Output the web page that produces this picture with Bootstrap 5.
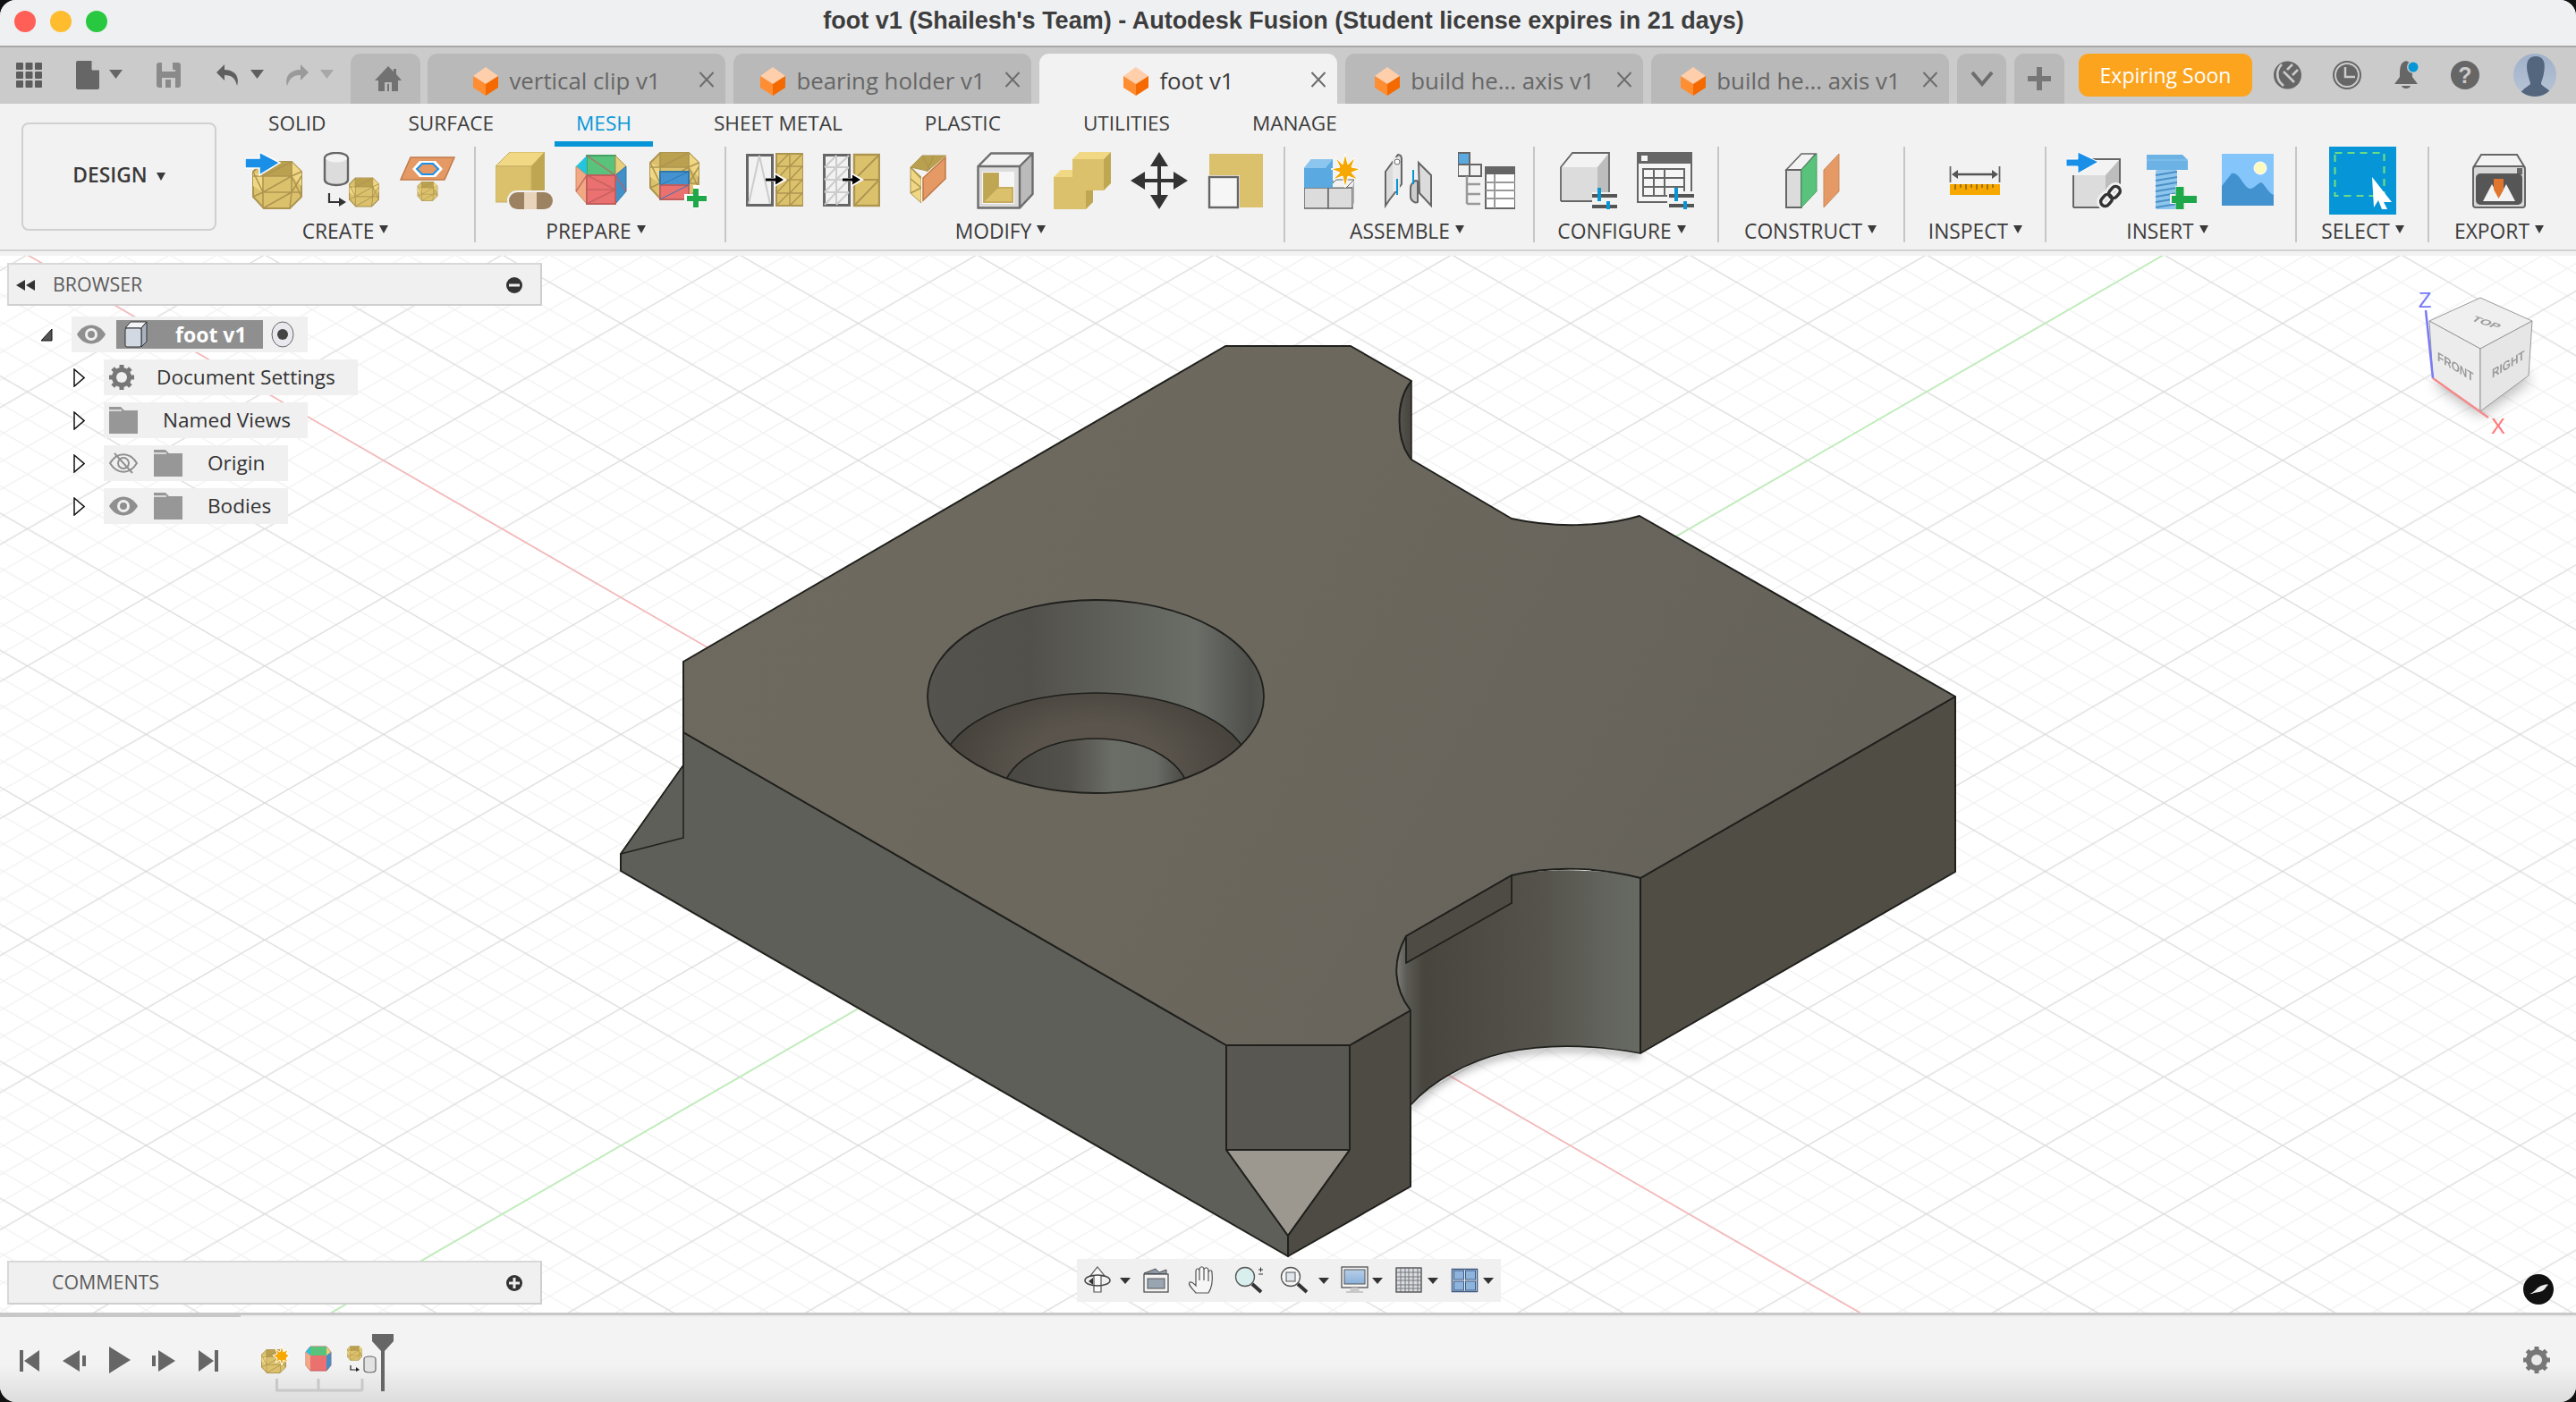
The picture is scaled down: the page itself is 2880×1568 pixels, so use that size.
<!DOCTYPE html>
<html lang="en">
<head>
<meta charset="utf-8">
<title>foot v1 - Autodesk Fusion</title>
<link href="https://cdn.jsdelivr.net/npm/bootstrap@5.3.0/dist/css/bootstrap.min.css" rel="stylesheet">
<style>
html,body{margin:0;width:2880px;height:1568px;overflow:hidden;background:#111}
body{font-family:"Open Sans","Noto Sans",sans-serif;color:#3a3a3a}
.fx-win{width:2880px;height:1568px;border-radius:18px;overflow:hidden;background:#f2f2f2}
.fx-title{height:53px;background:#eff0f2;border-bottom:2px solid #a8a8a8;font-family:"Liberation Sans",sans-serif;font-weight:700;font-size:27px;color:#3d3d3d;flex:none;padding:0 10px 4px 0}
.fx-lights{left:16px;top:12px;gap:16px}
.fx-light{width:24px;height:24px;border-radius:50%}
.fx-tabbar{height:63px;background:#cbcbcb;flex:none;padding-top:7px}
.fx-tool{width:392px;height:56px;flex:none}
.fx-tab{height:56px;width:333px;margin-right:9px;background:#b9b9b9;border-radius:11px 11px 0 0;font-size:25.8px;color:#666;padding:5px 21px 0 0;flex:none}
.fx-tab.fx-on{background:#f2f2f2;color:#3a3a3a}
.fx-x{right:12px;top:20px}
.fx-small{background:#b9b9b9;border-radius:11px 11px 0 0;height:56px;flex:none}
.fx-home{width:78px;margin-right:8px;padding-left:6px}
.fx-drop{width:55px;margin-right:9px}
.fx-plus{width:56px;margin-right:16px}
.fx-expiring{width:194px;height:48px;background:#fca41e;color:#fff;border:0;border-radius:11px;font-size:23px;padding:0;flex:none}
.fx-ribbon{height:170px;flex:none;background:#f2f2f2;position:relative}
.fx-ribbon::after{content:"";position:absolute;left:0;right:0;bottom:5px;height:2px;background:#d2d2d2}
.fx-design{width:218px;height:121px;margin:21px 14px 0 24px;border:2px solid #d0d0d0;border-radius:8px;font-size:22.8px;color:#3a3a3a;font-weight:600;background:#f2f2f2;padding:0 0 3px;flex:none}
.fx-rtabs{height:48px;font-size:22.6px;color:#3c3c3c;padding:7px 0 0 20px}
.fx-rtab{padding:0 24px;height:41px;line-height:30px;border-bottom:6px solid transparent;margin-left:44px}
.fx-rtab:first-child{margin-left:0}
.fx-rtab.fx-cur{color:#0696d7;border-bottom-color:#0696d7}
.fx-group{height:107px;border-right:2px solid #c6c6c6;flex:none}
.fx-icons{gap:22px;height:76px;padding-top:6px}
.fx-label{height:31px;font-size:22.8px;color:#3c3c3c;padding:7px 10px 0 0;line-height:24px;white-space:nowrap;gap:6px}
.fx-lb-create{padding-right:14px}
.fx-lb-assemble{padding-right:5px}
.fx-lb-construct{padding-right:2px}
.fx-lb-inspect{padding-right:0;padding-left:1px}
.fx-lb-insert{padding-right:8px}
.fx-lb-select{padding-right:0;padding-left:1px}
.fx-lb-export{padding-right:8px}
.fx-caret{width:0;height:0;border-left:5.5px solid transparent;border-right:5.5px solid transparent;border-top:9px solid #3a3a3a;display:inline-block;margin-bottom:5px}
.fx-caret-d{margin:3px 0 0 2px}
.fx-selbox{width:75px;height:76px;background:#0696d7;margin-top:-6px;flex:none}
.fx-view{height:1182px;background:#fff;flex:none;overflow:hidden}
.fx-canvas{left:0;top:0;width:2880px;height:1182px}
.fx-panel{left:8px;width:598px;background:#f0f0f0;border:2px solid #cfcfcf;border-top-color:#d8d8d8;border-left-color:#d8d8d8;color:#5c5c5c;font-size:21.4px}
.fx-browser{top:8px;height:48px;padding-top:1px}
.fx-comments{top:1124px;height:49px}
.fx-tree{left:0;top:68px;width:420px;gap:8px;font-size:22.6px;color:#333}
.fx-row{height:40px}
.fx-rowbox{background:#f0f0f0;height:40px}
.fx-sel{background:#8f8f8f;color:#fff;font-weight:700;height:32px;font-size:23px}
.fx-navbar{left:1204px;top:1122px;width:474px;height:48px;background:#f0f0f0}
.fx-cube{right:0;top:40px}
.fx-mark{right:25px;top:1139px;width:34px;height:34px;border-radius:50%;background:#111}
.fx-split{height:5px;flex:none;background:linear-gradient(#c8c8c8,#c8c8c8) 0 0/269px 100% no-repeat,linear-gradient(#c8c8c8 60%,#ececec 60%)}
.fx-time{flex:1;background:linear-gradient(#f3f3f3 55%,#dddddd 100%)}
.fx-tw1{margin-left:45px;margin-right:21px}
.fx-tw2{margin-left:82px;margin-right:21px}
</style>
</head>
<body>
<svg width="0" height="0" class="position-absolute">
<defs>
<symbol id="s-cube" viewBox="0 0 28 32"><polygon points="14,0 28,10 14,19 0,10" fill="#ffcfac"/><polygon points="0,10 14,19 14,32 0,23" fill="#ff8d32"/><polygon points="28,10 14,19 14,32 28,23" fill="#f46a00"/></symbol>
<symbol id="s-x" viewBox="0 0 18 18"><path d="M1.500 1 16.500 17M16.500 1 1.500 17" stroke="#6d6d6d" stroke-width="2" fill="none"/></symbol>
<symbol id="s-mesh" viewBox="0 0 56 54"><polygon points="12,1 44,1 55,12 55,40 42,53 13,53 1,40 1,12" fill="#dcc16d" stroke="#ad954f" stroke-width="2"/><polygon points="12,1 44,1 44,17 12,17" fill="#baa04f"/><polygon points="44,1 55,12 55,28 44,17" fill="#f0d784"/><polygon points="1,12 12,17 12,35 1,28" fill="#f0d784"/><path d="M12 1V53M44 1V35L42 53M1 17 12 17H44L55 12M12 35H55M1 40 12 35M12 17 44 1M12 35 44 17M12 53 44 35M1 12 12 35M44 35 55 17M44 17 55 40" stroke="#ad954f" stroke-width="1.600" fill="none"/></symbol>
<symbol id="s-eye" viewBox="0 0 32 22"><path d="M0 11C8-3 24-3 32 11 24 25 8 25 0 11Z" fill="#8f8f8f"/><circle cx="16" cy="11" r="7" fill="#f0f0f0"/><circle cx="16" cy="11" r="4" fill="#8f8f8f"/></symbol>
<symbol id="s-folder" viewBox="0 0 32 30"><path d="M0 0H13L17 4H32V30H0Z" fill="#979797"/><path d="M0 4H14" stroke="#eee" stroke-width="1.500"/></symbol>
<symbol id="s-arrow" viewBox="0 0 13 21"><path d="M1 1 12 10.500 1 20Z" fill="#fff" stroke="#111" stroke-width="1.500"/></symbol>
</defs>
</svg>
<div class="fx-win d-flex flex-column">

<div class="fx-title position-relative d-flex align-items-center justify-content-center">
  <div class="fx-lights position-absolute d-flex">
    <div class="fx-light" style="background:#ff5f57"></div>
    <div class="fx-light" style="background:#febc2e"></div>
    <div class="fx-light" style="background:#28c840"></div>
  </div>
  <span>foot v1 (Shailesh's Team) - Autodesk Fusion (Student license expires in 21 days)</span>
</div>

<div class="fx-tabbar d-flex">
  <div class="fx-tool d-flex align-items-start">
    <svg width="392" height="56" viewBox="0 60 392 56">
      <g fill="#5d5d5d"><rect x="18" y="70" width="8" height="8" rx="1"/><rect x="28.500" y="70" width="8" height="8" rx="1"/><rect x="39" y="70" width="8" height="8" rx="1"/><rect x="18" y="80" width="8" height="8" rx="1"/><rect x="28.500" y="80" width="8" height="8" rx="1"/><rect x="39" y="80" width="8" height="8" rx="1"/><rect x="18" y="90" width="8" height="8" rx="1"/><rect x="28.500" y="90" width="8" height="8" rx="1"/><rect x="39" y="90" width="8" height="8" rx="1"/></g>
      <path d="M87 68H103L111 78V98a2 2 0 0 1-2 2H87a2 2 0 0 1-2-2V70a2 2 0 0 1 2-2Z" fill="#666"/><path d="M103 68V78H111Z" fill="#cbcbcb" stroke="#cbcbcb"/><path d="M122 78H137L129.500 88Z" fill="#666"/>
      <path d="M178 70H199a3 3 0 0 1 3 3V95a3 3 0 0 1-3 3H178a3 3 0 0 1-3-3V73a3 3 0 0 1 3-3Z" fill="#8a8a8a"/><rect x="181" y="70" width="15" height="10" fill="#cbcbcb"/><rect x="193" y="70" width="3" height="8" fill="#8a8a8a"/><rect x="181" y="87" width="15" height="11" fill="#cbcbcb"/><rect x="185" y="89" width="6" height="9" fill="#8a8a8a"/>
      <path d="M251 72 242 81 251 90V84C259 84 263 87 265 96 268 86 263 78 251 78Z" fill="#5f5f5f"/><path d="M280 78H295L287.500 88Z" fill="#5f5f5f"/>
      <path d="M336 72 345 81 336 90V84C328 84 324 87 321 96 318 86 324 78 336 78Z" fill="#9a9a9a"/><path d="M358 78H373L365.500 88Z" fill="#a8a8a8"/>
    </svg>
  </div>
  <div class="fx-small fx-home d-flex align-items-center justify-content-center">
    <svg width="30" height="28" viewBox="0 0 30 28"><path d="M15 0 21 6V3H24V9L30 16H26V28H4V16H0Z" fill="#727272"/><rect x="11" y="18" width="8" height="10" fill="#b9b9b9"/><rect x="14" y="20" width="2" height="8" fill="#727272"/></svg>
  </div>
  <div class="fx-tab position-relative d-flex align-items-center justify-content-center gap-2"><svg width="28" height="32"><use href="#s-cube"/></svg><span class="ms-1">vertical clip v1</span><svg class="fx-x position-absolute" width="18" height="18"><use href="#s-x"/></svg></div>
  <div class="fx-tab position-relative d-flex align-items-center justify-content-center gap-2"><svg width="28" height="32"><use href="#s-cube"/></svg><span class="ms-1">bearing holder v1</span><svg class="fx-x position-absolute" width="18" height="18"><use href="#s-x"/></svg></div>
  <div class="fx-tab fx-on position-relative d-flex align-items-center justify-content-center gap-2"><svg width="28" height="32"><use href="#s-cube"/></svg><span class="ms-1">foot v1</span><svg class="fx-x position-absolute" width="18" height="18"><use href="#s-x"/></svg></div>
  <div class="fx-tab position-relative d-flex align-items-center justify-content-center gap-2"><svg width="28" height="32"><use href="#s-cube"/></svg><span class="ms-1">build he... axis v1</span><svg class="fx-x position-absolute" width="18" height="18"><use href="#s-x"/></svg></div>
  <div class="fx-tab position-relative d-flex align-items-center justify-content-center gap-2"><svg width="28" height="32"><use href="#s-cube"/></svg><span class="ms-1">build he... axis v1</span><svg class="fx-x position-absolute" width="18" height="18"><use href="#s-x"/></svg></div>
  <div class="fx-small fx-drop d-flex align-items-center justify-content-center"><svg width="26" height="18" viewBox="0 0 26 18"><path d="M2 2 13 15 24 2" fill="none" stroke="#6d6d6d" stroke-width="4"/></svg></div>
  <div class="fx-small fx-plus d-flex align-items-center justify-content-center"><svg width="26" height="26" viewBox="0 0 26 26"><path d="M10 0H16V10H26V16H16V26H10V16H0V10H10Z" fill="#777"/></svg></div>
  <button type="button" class="btn fx-expiring">Expiring Soon</button>
  <svg width="340" height="48" viewBox="2518 60 340 48">
    <circle cx="2557.500" cy="84" r="15.500" fill="#666"/><path d="M2551 72C2545 78 2545 86 2549 92L2553 96M2553 80 2565 92" stroke="#cbcbcb" stroke-width="2.600" fill="none"/><path d="M2557 78 2563 72M2563 84 2569 78" stroke="#cbcbcb" stroke-width="2.600" fill="none"/>
    <circle cx="2624" cy="84" r="15" fill="none" stroke="#666" stroke-width="2"/><circle cx="2624" cy="84" r="12" fill="#666"/><path d="M2622 75V86H2633" stroke="#cbcbcb" stroke-width="2.500" fill="none"/>
    <path d="M2690 68C2683 70 2683 76 2683 86L2677 94H2703L2697 86C2697 76 2697 70 2690 68Z" fill="#666"/><path d="M2685 96H2695C2694 100 2686 100 2685 96Z" fill="#666"/><circle cx="2698" cy="75" r="7" fill="#cbcbcb"/><circle cx="2698" cy="75" r="5.500" fill="#0696d7"/>
    <circle cx="2756" cy="84" r="16" fill="#666"/><text x="2756" y="93" font-family="Liberation Sans,sans-serif" font-weight="700" font-size="25" fill="#cbcbcb" text-anchor="middle">?</text>
    <defs><clipPath id="c-av"><circle cx="2834" cy="84" r="24"/></clipPath><linearGradient id="g-av" x1="0" y1="0" x2="0" y2="1"><stop offset="0" stop-color="#9fb0c9"/><stop offset="1" stop-color="#b9c5d6"/></linearGradient></defs>
    <circle cx="2834" cy="84" r="24" fill="url(#g-av)"/><g clip-path="url(#c-av)"><path d="M2835 63C2825 63 2824 72 2826 82 2827 88 2829 91 2829 94 2826 97 2820 99 2815 108H2856C2850 99 2843 97 2841 94 2841 91 2843 88 2844 82 2846 72 2845 63 2835 63Z" fill="#54657e"/></g>
  </svg>
</div>

<div class="fx-ribbon d-flex">
  <button type="button" class="btn fx-design d-flex align-items-center justify-content-center gap-2"><span>DESIGN</span><span class="fx-caret fx-caret-d"></span></button>
  <div class="d-flex flex-column">
    <div class="fx-rtabs d-flex">
      <div class="fx-rtab">SOLID</div><div class="fx-rtab">SURFACE</div><div class="fx-rtab fx-cur">MESH</div><div class="fx-rtab">SHEET METAL</div><div class="fx-rtab">PLASTIC</div><div class="fx-rtab">UTILITIES</div><div class="fx-rtab">MANAGE</div>
    </div>
    <div class="d-flex">

      <div class="fx-group" style="width:276px">
        <div class="fx-icons d-flex" style="padding-left:18px">
          <svg width="64" height="64" viewBox="0 0 64 64"><use href="#s-mesh" x="8" y="10" width="56" height="54"/><path d="M0 7H16V0L39 12 16 26V18H0Z" fill="#1a8fe8" stroke="#fff" stroke-width="1.500"/></svg>
          <svg width="64" height="64" viewBox="0 0 64 64"><path d="M3 7C3-1 29-1 29 7V31C29 39 3 39 3 31Z" fill="#dcdcdc" stroke="#666" stroke-width="2.400"/><path d="M4 7C6 13 26 13 28 7 26 1 6 1 4 7Z" fill="#f3f3f3"/><use href="#s-mesh" x="30" y="26" width="34" height="38"/><path d="M8 46V56H20" stroke="#333" stroke-width="2.200" fill="none"/><path d="M19 51 27 56 19 61Z" fill="#333"/></svg>
          <svg width="64" height="64" viewBox="0 0 64 64"><use href="#s-mesh" x="15" y="33" width="34" height="22"/><polygon points="13,6 62,6 51,31 2,31" fill="#e59965" stroke="#c07a4a" stroke-width="1.500"/><polygon points="15,19 23,10 41,10 49,19 41,28 23,28" fill="#fff"/><polygon points="20,19 26,13 38,13 44,19 38,25 26,25" fill="#e59965" stroke="#1a8fe8" stroke-width="2"/></svg>
        </div>
        <div class="fx-label fx-lb-create d-flex align-items-center justify-content-center">CREATE<i class="fx-caret"></i></div>
      </div>

      <div class="fx-group" style="width:280px">
        <div class="fx-icons d-flex" style="padding-left:22px">
          <svg width="64" height="64" viewBox="0 0 64 64"><polygon points="0,16 16,0 55,0 40,16" fill="#f1d885" stroke="#c6ad60" stroke-width="1"/><polygon points="40,16 55,0 55,43 40,58" fill="#bea653"/><rect x="0" y="16" width="40" height="40" fill="#dcc16d" stroke="#c6ad60" stroke-width="1"/><rect x="13" y="43" width="52" height="22" rx="11" fill="#f2f2f2"/><rect x="15" y="45" width="49" height="19" rx="9.500" fill="#9c8260"/><rect x="32" y="45" width="14" height="19" fill="#e8d3bb"/></svg>
          <svg width="64" height="64" viewBox="0 0 64 64"><polygon points="16,4 48,4 48,26 16,26" fill="#59c27b" stroke="#47a164" stroke-width="2"/><polygon points="16,4 4,16 16,26" fill="#22c5dd"/><polygon points="48,4 60,16 48,26" fill="#e8cf7c" stroke="#ad954f"/><polygon points="4,16 16,26 16,58 4,44" fill="#f2a883" stroke="#d08c67"/><polygon points="48,26 60,16 60,44 48,58" fill="#4190c8" stroke="#2f78ae"/><rect x="16" y="26" width="32" height="32" fill="#ea7170" stroke="#c05e5e" stroke-width="2"/><path d="M16 42H48M16 26 48 42M16 58 48 42M16 4 48 26M48 26 60 44M4 44 16 26" stroke="#c05e5e" stroke-width="1.500" opacity=".8" fill="none"/></svg>
          <svg width="64" height="64" viewBox="0 0 64 64"><use href="#s-mesh" x="0" y="0" width="56" height="54"/><rect x="12" y="22" width="32" height="15" fill="#4492cf" stroke="#2f78ae" stroke-width="2"/><rect x="12" y="37" width="32" height="16" fill="#ea7170" stroke="#c05e5e" stroke-width="2"/><path d="M12 37 44 22M12 53 44 37" stroke="#2f78ae" stroke-width="1"/><path d="M51 38H58V48H66V55H58V64H51V55H41V48H51Z" fill="#fff" transform="translate(-2 -1)"/><path d="M49 41H55V49H64V55H55V62H49V55H42V49H49Z" fill="#1ea84a"/></svg>
        </div>
        <div class="fx-label d-flex align-items-center justify-content-center">PREPARE<i class="fx-caret"></i></div>
      </div>

      <div class="fx-group" style="width:625px">
        <div class="fx-icons d-flex" style="padding-left:22px">
          <svg width="64" height="64" viewBox="0 0 64 64"><rect x="1.500" y="3.500" width="28" height="56" fill="#f2f2f2" stroke="#666" stroke-width="3"/><path d="M15 4 3 58M15 4 27 58" stroke="#ccc" stroke-width="2" fill="none"/><rect x="34" y="2" width="30" height="58" fill="#dcc16d" stroke="#ad954f" stroke-width="2"/><path d="M49 2V60M34 16H64M34 31H64M34 46H64M34 16 48 2M49 16 63 2M34 31 48 16M49 31 63 16M34 46 48 31M49 46 63 31M34 60 48 46M49 60 63 46" stroke="#ad954f" stroke-width="1.500" fill="none"/><path d="M22 29H32V23L46 31 32 39V33H22Z" fill="#fff"/><path d="M22 29.500H33V25.500L42 31 33 36.500V32.500H22Z" fill="#000"/></svg>
          <svg width="64" height="64" viewBox="0 0 64 64"><rect x="1.500" y="3.500" width="28" height="56" fill="#f2f2f2" stroke="#666" stroke-width="3"/><path d="M15 4V58M2 17H29M2 31H29M2 45H29M2 17 15 4M15 17 29 4M2 31 15 17M15 31 29 17M2 45 15 31M15 45 29 31M2 59 15 45M15 59 29 45" stroke="#ccc" stroke-width="2" fill="none"/><rect x="35" y="3" width="28" height="57" fill="#dcc16d" stroke="#ad954f" stroke-width="2.400"/><path d="M35 31H63M35 31 63 3M35 60 63 31" stroke="#ad954f" stroke-width="1.800" fill="none"/><path d="M22 29H32V23L46 31 32 39V33H22Z" fill="#fff"/><path d="M22 29.500H33V25.500L42 31 33 36.500V32.500H22Z" fill="#000"/></svg>
          <svg width="64" height="64" viewBox="0 0 64 64"><polygon points="25,4 52,4 35,22 12,17" fill="#b9a04f" stroke="#ad954f"/><polygon points="12,17 12,46 24,57 24,28" fill="#f0d784" stroke="#ad954f"/><path d="M12 30 24 40M12 46 24 40M12 17 24 30M25 4 35 22M38 4 30 22" stroke="#ad954f" stroke-width="1.500" fill="none"/><polygon points="24,28 24,57 52,31 52,4" fill="#fff"/><polygon points="26,29 26,54 51,30 51,6" fill="#e59965" stroke="#c07a4a" stroke-width="1.600"/></svg>
          <svg width="64" height="64" viewBox="0 0 64 64"><polygon points="1.500,16 16,1.500 62.500,1.500 48,16" fill="#f3f3f3"/><polygon points="48,16 62.500,1.500 62.500,47 48,62" fill="#bbb"/><rect x="1.500" y="16" width="46.500" height="46.500" fill="#dcdcdc"/><path d="M1.500 16 16 1.500H62.500V47L48 62.500H1.500ZM48 16H1.500M48 16 62.500 1.500M48 16V62" stroke="#666" stroke-width="2.400" fill="none" stroke-opacity=".95"/><rect x="6" y="22" width="36" height="36" fill="#f6f6f6"/><polygon points="8,24 24,24 24,40 40,40 40,56 8,56" fill="#dcc16d" stroke="#c6ad60" stroke-width="2"/><polygon points="8,24 24,24 24,40 8,56" fill="#bea653"/></svg>
          <svg width="64" height="64" viewBox="0 0 64 64"><polygon points="21,8 29,0 64,0 56,8" fill="#f1d885"/><polygon points="56,8 64,0 64,35 56,43" fill="#bea653"/><rect x="21" y="8" width="35" height="35" fill="#dcc16d"/><polygon points="0,28 8,20 21,20 21,28" fill="#f1d885"/><rect x="0" y="28" width="36" height="36" fill="#dcc16d"/><rect x="21" y="28" width="15" height="15" fill="#dcc16d"/><polygon points="36,43 44,43 44,56 36,64" fill="#bea653"/></svg>
          <svg width="64" height="64" viewBox="0 0 64 64"><path d="M30 8H34V56H30ZM8 30H56V34H8Z" fill="#333"/><path d="M32 0 42 16H22ZM32 64 22 48H42ZM0 32 16 22V42ZM64 32 48 42V22Z" fill="#333"/></svg>
          <svg width="64" height="64" viewBox="0 0 64 64"><rect x="2" y="2" width="60" height="60" fill="#dcc16d"/><rect x="0" y="26" width="36" height="38" fill="#f2f2f2"/><rect x="2" y="28" width="32" height="34" fill="#f6f6f6" stroke="#666" stroke-width="2.400"/></svg>
        </div>
        <div class="fx-label d-flex align-items-center justify-content-center">MODIFY<i class="fx-caret"></i></div>
      </div>

      <div class="fx-group" style="width:279px">
        <div class="fx-icons d-flex" style="padding-left:21px">
          <svg width="64" height="64" viewBox="0 0 64 64"><polygon points="0,40 9,31 32,31 32,40" fill="#f2f2f2" stroke="#666"/><rect x="0" y="40" width="27" height="23" fill="#dcdcdc" stroke="#666" stroke-width="1.500"/><rect x="27" y="40" width="27" height="23" fill="#dcdcdc" stroke="#666" stroke-width="1.500"/><polygon points="27,40 36,31 56,31 47,40" fill="#f3f3f3" stroke="#666"/><polygon points="54,40 56,31 56,56 54,63" fill="#aaa"/><polygon points="0,18 8,8 32,8 32,40 0,40" fill="#5aa9e0"/><polygon points="0,18 8,8 32,8 24,18" fill="#8cc6ef"/><path d="M46 2 49 14 57 6 53 17 63 19 53 23 60 31 49 27 46 40 43 27 32 31 40 23 30 19 40 17 35 6 43 14Z" fill="#f6a800" stroke="#fff" stroke-width="1"/></svg>
          <svg width="64" height="64" viewBox="0 0 64 64"><path d="M19 3C22 3 23 5 23 8V36L9 54 5 60V22Z" fill="#dcdcdc" stroke="#666" stroke-width="2"/><rect x="13" y="6" width="8" height="38" fill="#e9e9e9"/><circle cx="18" cy="11" r="3" fill="#fff" stroke="#666"/><path d="M33 40C33 36 38 30 41 33V56C38 58 33 54 33 50Z" fill="#ccc" stroke="#666" stroke-width="2"/><path d="M42 12 56 26V60L43 46Z" fill="#dcdcdc" stroke="#666" stroke-width="2"/><path d="M18 30V48M36 20V36" stroke="#0696d7" stroke-width="2"/></svg>
          <svg width="64" height="64" viewBox="0 0 64 64"><rect x="0" y="1" width="13" height="13" fill="#5aa9e0" stroke="#666" stroke-width="2"/><rect x="0" y="14" width="13" height="13" fill="#f2f2f2" stroke="#666" stroke-width="2"/><rect x="13" y="14" width="13" height="13" fill="#f2f2f2" stroke="#666" stroke-width="2"/><path d="M10 27V58M10 36H25M10 47H25M10 58H25" stroke="#999" stroke-width="2.500" fill="none"/><rect x="31" y="17" width="33" height="46" fill="#fff" stroke="#666" stroke-width="2"/><rect x="31" y="17" width="33" height="8" fill="#666"/><path d="M31 34H64M31 43H64M31 52H64M41 25V63" stroke="#999" stroke-width="2"/></svg>
        </div>
        <div class="fx-label fx-lb-assemble d-flex align-items-center justify-content-center">ASSEMBLE<i class="fx-caret"></i></div>
      </div>

      <div class="fx-group" style="width:206px">
        <div class="fx-icons d-flex" style="padding-left:28px">
          <svg width="64" height="64" viewBox="0 0 64 64"><polygon points="1,17 14,1 55,1 42,17" fill="#f3f3f3"/><polygon points="42,17 55,1 55,47 42,56" fill="#bdbdbd"/><rect x="1" y="17" width="41" height="38" fill="#dcdcdc"/><path d="M1 55V17L14 1H55V47" stroke="#666" stroke-width="1.800" fill="none"/><path d="M1 55H42" stroke="#666" stroke-width="1.800"/><rect x="36" y="45" width="28" height="19" fill="#f2f2f2"/><path d="M36 49H64M36 61H64" stroke="#555" stroke-width="4"/><path d="M44 40V55M54 55V64" stroke="#0696d7" stroke-width="4"/></svg>
          <svg width="64" height="64" viewBox="0 0 64 64"><rect x="1" y="1" width="60" height="55" fill="#f5f5f5" stroke="#666" stroke-width="2"/><rect x="1" y="1" width="60" height="12" fill="#666"/><rect x="5" y="4" width="7" height="6" fill="#f5f5f5"/><rect x="7" y="19" width="46" height="30" fill="none" stroke="#666" stroke-width="2"/><path d="M7 29H53M7 39H53M19 19V49M31 19V49" stroke="#666" stroke-width="2"/><rect x="34" y="44" width="30" height="20" fill="#f2f2f2"/><path d="M36 49H64M36 60H64" stroke="#555" stroke-width="4"/><path d="M44 40V55M54 55V64" stroke="#0696d7" stroke-width="4"/></svg>
        </div>
        <div class="fx-label d-flex align-items-center justify-content-center">CONFIGURE<i class="fx-caret"></i></div>
      </div>

      <div class="fx-group" style="width:208px">
        <div class="fx-icons d-flex" style="padding-left:72px">
          <svg width="64" height="64" viewBox="0 0 64 64"><polygon points="3,20 20,2 36,2 20,20" fill="#f3f3f3" stroke="#666" stroke-width="1.500"/><rect x="3" y="20" width="17" height="42" fill="#dcdcdc" stroke="#666" stroke-width="2"/><polygon points="20,20 37,2 37,44 20,62" fill="#59c27b" stroke="#47a164"/><polygon points="45,20 62,2 62,44 45,62" fill="#e59965" stroke="#c98a5c"/></svg>
        </div>
        <div class="fx-label fx-lb-construct d-flex align-items-center justify-content-center">CONSTRUCT<i class="fx-caret"></i></div>
      </div>

      <div class="fx-group" style="width:158px">
        <div class="fx-icons d-flex" style="padding-left:46px">
          <svg width="64" height="64" viewBox="0 0 64 64"><path d="M4.500 16V34M59.500 16V34" stroke="#666" stroke-width="1.800"/><path d="M10 25H54" stroke="#555" stroke-width="2.400"/><path d="M6 25 13 20V30ZM58 25 51 20V30Z" fill="#555"/><rect x="4" y="36" width="56" height="12" fill="#f6a800"/><path d="M10 36V42M16 36V40M22 36V42M28 36V40M34 36V42M40 36V40M46 36V42M52 36V40" stroke="#7a5500" stroke-width="1.300"/></svg>
        </div>
        <div class="fx-label fx-lb-inspect d-flex align-items-center justify-content-center">INSPECT<i class="fx-caret"></i></div>
      </div>

      <div class="fx-group" style="width:280px">
        <div class="fx-icons d-flex" style="padding-left:22px">
          <svg width="64" height="64" viewBox="0 0 64 64"><polygon points="8,26 24,8 60,8 44,26" fill="#f3f3f3"/><polygon points="44,26 60,8 60,48 44,62" fill="#bdbdbd"/><rect x="8" y="26" width="36" height="36" fill="#dcdcdc"/><path d="M8 62V26M24 8H60V44" stroke="#666" stroke-width="2" fill="none"/><path d="M8 62H40" stroke="#666" stroke-width="2"/><path d="M0 8H13V0L36 11 13 24V16H0Z" fill="#1a8fe8" stroke="#fff"/><g fill="none" stroke="#f2f2f2" stroke-width="9"><rect x="38" y="49" width="14" height="10" rx="5" transform="rotate(-50 45 54)"/><rect x="47" y="40" width="14" height="10" rx="5" transform="rotate(-50 54 45)"/></g><g fill="none" stroke="#333" stroke-width="3.500"><rect x="38" y="49" width="14" height="10" rx="5" transform="rotate(-50 45 54)"/><rect x="47" y="40" width="14" height="10" rx="5" transform="rotate(-50 54 45)"/></g></svg>
          <svg width="64" height="64" viewBox="0 0 64 64"><polygon points="4,3 44,3 50,9 50,20 44,20 4,20" fill="#6db2e4"/><path d="M4 9H50" stroke="#8cc6ef" stroke-width="1"/><rect x="14" y="20" width="24" height="44" rx="2" fill="#8cc6ef"/><path d="M14 26 38 22M14 32 38 28M14 38 38 34M14 44 38 40M14 50 38 46M14 56 38 52M14 62 38 58" stroke="#4a8fc5" stroke-width="1.800"/><path d="M36 38H46V47H61V58H46V64H36V58H30V47H36Z" fill="#f2f2f2"/><path d="M36.500 39H45.500V49H60V57H45.500V64H36.500V57H32V49H36.500Z" fill="#1ea84a"/></svg>
          <svg width="64" height="64" viewBox="0 0 64 64"><rect x="2" y="2" width="58" height="58" fill="#84c5fb"/><circle cx="45" cy="18" r="7" fill="#fdfac0" stroke="#fff"/><path d="M2 60V38L13 24C21 22 25 36 31 40 36 44 40 36 46 34 50 36 54 46 60 48V60Z" fill="#4292cf"/></svg>
        </div>
        <div class="fx-label fx-lb-insert d-flex align-items-center justify-content-center">INSERT<i class="fx-caret"></i></div>
      </div>

      <div class="fx-group" style="width:148px">
        <div class="fx-icons d-flex" style="padding-left:36px">
          <div class="fx-selbox"><svg width="75" height="76" viewBox="0 0 75 76"><rect x="6.500" y="7" width="55" height="48" fill="none" stroke="#6cdc84" stroke-width="2.200" stroke-dasharray="8 6"/><path d="M48 34 70 62H61L65 70 59 70 55 60 50 68Z" fill="#fff"/></svg></div>
        </div>
        <div class="fx-label fx-lb-select d-flex align-items-center justify-content-center">SELECT<i class="fx-caret"></i></div>
      </div>

      <div class="fx-group" style="width:164px;border-right:0">
        <div class="fx-icons d-flex" style="padding-left:46px">
          <svg width="64" height="64" viewBox="0 0 64 64"><path d="M4 16 12 3H52L60 16Z" fill="#f3f3f3" stroke="#666" stroke-width="2"/><rect x="3" y="16" width="58" height="46" rx="3" fill="#d8d8d8" stroke="#666" stroke-width="2"/><rect x="52" y="18" width="6" height="7" fill="#666"/><rect x="6" y="24" width="52" height="35" rx="5" fill="#565656"/><path d="M14 55 24 36 31 49 33 49 40 36 50 55Z" fill="#f3f3f3"/><path d="M26 30H37V42L31.500 52 26 42Z" fill="#e0752e"/></svg>
        </div>
        <div class="fx-label fx-lb-export d-flex align-items-center justify-content-center">EXPORT<i class="fx-caret"></i></div>
      </div>

    </div>
  </div>
</div>

<div class="fx-view position-relative">
  <svg class="fx-canvas position-absolute" viewBox="0 286 2880 1182" width="2880" height="1182">
    <defs>
      <pattern id="p-grid" patternUnits="userSpaceOnUse" x="30.600" y="285" width="265.400" height="153.240">
        <g fill="none" stroke="#f1f1f1" stroke-width="1.300">
          <path d="M53.080 0 265.400 122.590M0 30.650 212.320 153.240M106.160 0 265.400 91.940M0 61.300 159.240 153.240M159.240 0 265.400 61.300M0 91.940 106.160 153.240M212.320 0 265.400 30.650M0 122.590 53.080 153.240"/>
          <path d="M212.320 0 0 122.590M265.400 30.650 53.080 153.240M159.240 0 0 91.940M265.400 61.300 106.160 153.240M106.160 0 0 61.300M265.400 91.940 159.240 153.240M53.080 0 0 30.650M265.400 122.590 212.320 153.240"/>
        </g>
        <path d="M0 0 265.400 153.240M265.400 0 0 153.240" stroke="#dcdcdc" stroke-width="1.400" fill="none"/>
      </pattern>
      <linearGradient id="g-top" x1="0" y1="0" x2="1" y2="0.300"><stop offset="0" stop-color="#6e6a5f"/><stop offset="0.500" stop-color="#6c685e"/><stop offset="1" stop-color="#65625a"/></linearGradient>
      <linearGradient id="g-cut" gradientUnits="userSpaceOnUse" x1="1556" y1="0" x2="1834" y2="0"><stop offset="0" stop-color="#8c8c86"/><stop offset="0.060" stop-color="#5c5a54"/><stop offset="0.130" stop-color="#48453f"/><stop offset="0.350" stop-color="#4e4b44"/><stop offset="0.620" stop-color="#55534c"/><stop offset="0.860" stop-color="#63645e"/><stop offset="1" stop-color="#676963"/></linearGradient>
      <linearGradient id="g-hole" gradientUnits="userSpaceOnUse" x1="1037" y1="0" x2="1413" y2="0"><stop offset="0" stop-color="#55534d"/><stop offset="0.300" stop-color="#52504a"/><stop offset="0.550" stop-color="#5f605a"/><stop offset="0.800" stop-color="#6b6d67"/><stop offset="0.960" stop-color="#4f504c"/><stop offset="1" stop-color="#55564f"/></linearGradient>
      <linearGradient id="g-inner" gradientUnits="userSpaceOnUse" x1="1128" y1="0" x2="1322" y2="0"><stop offset="0" stop-color="#4a4842"/><stop offset="0.350" stop-color="#53514b"/><stop offset="0.600" stop-color="#6b6d67"/><stop offset="0.850" stop-color="#686a64"/><stop offset="1" stop-color="#4d4d48"/></linearGradient>
      <radialGradient id="g-floor" gradientUnits="userSpaceOnUse" cx="1225" cy="860" r="170" gradientTransform="translate(0 340) scale(1 0.6)"><stop offset="0.450" stop-color="#5a544c"/><stop offset="1" stop-color="#45423b"/></radialGradient>
      <clipPath id="c-hole"><ellipse cx="1225" cy="779" rx="188" ry="108"/></clipPath>
      <filter id="f-soft" x="-20%" y="-40%" width="140%" height="180%"><feGaussianBlur stdDeviation="5"/></filter>
      <linearGradient id="g-notch" x1="0" y1="0" x2="1" y2="0"><stop offset="0" stop-color="#8a8a85"/><stop offset="0.450" stop-color="#55534d"/><stop offset="1" stop-color="#45423c"/></linearGradient>
    </defs>
    <rect x="0" y="286" width="2880" height="1182" fill="#fff"/>
    <rect x="0" y="286" width="2880" height="1182" fill="url(#p-grid)"/>
    <path d="M30.600 285 2079 1468" stroke="#f8b4b4" stroke-width="1.500" fill="none"/>
    <path d="M2419 285 371 1468" stroke="#b8efb1" stroke-width="1.500" fill="none"/>
    <path d="M1834 1180C1790 1172 1735 1168 1683 1179 1640 1189 1600 1212 1577 1238" stroke="#000" stroke-opacity=".3" stroke-width="8" fill="none" filter="url(#f-soft)"/>
    <g stroke="#1f1f1c" stroke-width="2" stroke-linejoin="round">
      <polygon points="764,819 1371,1169 1371,1286 1440,1382 1440,1405 694,974 694,955 764,856" fill="#5f5f59"/>
      <polygon points="764,856 694,955 764,937" fill="#5f5f59" stroke-width="1.500"/>
      <polygon points="1371,1169 1509,1169 1509,1286 1371,1286" fill="#585751"/>
      <polygon points="1371,1286 1509,1286 1440,1382" fill="#9c9890"/>
      <polygon points="1509,1169 1577,1130 1577,1327 1440,1405 1440,1382 1509,1286" fill="#4e4b44"/>
      <path d="M1550 1047H1572L1690 979C1715 972 1790 970 1834 982V1178C1790 1170 1735 1166 1683 1177 1640 1187 1600 1210 1577 1236V1130H1550Z" fill="url(#g-cut)" stroke="none"/>
      <path d="M1834 1178C1790 1170 1735 1166 1683 1177 1640 1187 1600 1210 1577 1236" fill="none" stroke-width="1.600"/>
      <polygon points="1834,982 2186,779 2186,975 1834,1178" fill="#504d45"/>
      <rect x="1556" y="426" width="22" height="88" fill="url(#g-notch)" stroke="none"/>
      <path d="M1578 426V514" fill="none" stroke-width="1.500"/>
      <path d="M1370 387H1510L1578 426C1560 448 1560 492 1578 514L1690 580C1735 590 1790 590 1833 577L2186 779 1834 982C1790 970 1735 968 1690 979L1572 1047C1556 1075 1558 1105 1577 1130L1509 1169H1371L764 819V740Z" fill="url(#g-top)"/>
      <polygon points="1572,1047 1690,979 1690,1010 1572,1077" fill="#4e4b45" stroke-width="1.800"/>
      <path d="M1577 1130V1236" fill="none" stroke-width="1.600"/>
      <path d="M1834 982V1178" fill="none" stroke-width="1.200"/>
    </g>
    <g clip-path="url(#c-hole)">
      <rect x="1030" y="660" width="390" height="240" fill="url(#g-hole)"/>
      <ellipse cx="1225" cy="861" rx="172" ry="86" fill="url(#g-floor)" stroke="#1f1f1c" stroke-width="1.600"/>
      <ellipse cx="1225" cy="889" rx="104" ry="63" fill="url(#g-inner)" stroke="#1f1f1c" stroke-width="1.600"/>
    </g>
    <ellipse cx="1225" cy="779" rx="188" ry="108" fill="none" stroke="#1f1f1c" stroke-width="1.800"/>
  </svg>

  <div class="fx-panel fx-browser position-absolute d-flex align-items-center">
    <svg width="21" height="12" viewBox="0 0 21 12" style="margin-left:8px"><path d="M10 0V12L0 6ZM21 0V12L11 6Z" fill="#333"/></svg>
    <span style="margin-left:20px">BROWSER</span>
    <svg class="ms-auto" width="20" height="20" viewBox="0 0 20 20" style="margin-right:19px"><circle cx="10" cy="10" r="9" fill="#333"/><rect x="4" y="8.500" width="12" height="3" fill="#eee"/></svg>
  </div>

  <div class="fx-tree position-absolute d-flex flex-column">
    <div class="fx-row d-flex align-items-center">
      <svg class="fx-tw1" width="14" height="15" viewBox="0 0 14 15"><path d="M13 1V14H1Z" fill="#555" stroke="#111"/></svg>
      <div class="fx-rowbox d-flex align-items-center" style="width:264px">
        <svg style="margin-left:6px" width="32" height="22"><use href="#s-eye"/></svg>
        <div class="fx-sel d-flex align-items-center" style="width:164px;margin-left:12px">
          <svg style="margin-left:9px" width="26" height="32" viewBox="0 0 26 32"><polygon points="1,9 7,2 25,2 19,9" fill="#f3f5f9" stroke="#333"/><polygon points="19,9 25,2 25,24 19,30" fill="#aab3c2" stroke="#333"/><rect x="1" y="9" width="18" height="21" rx="2" fill="#d3d9e3" stroke="#333"/></svg>
          <span style="margin-left:31px">foot v1</span>
        </div>
        <svg style="margin-left:9px" width="26" height="30" viewBox="0 0 26 30"><ellipse cx="13" cy="15" rx="12" ry="14" fill="#e8e8ee" stroke="#666"/><circle cx="13" cy="15" r="6" fill="#444"/></svg>
      </div>
    </div>
    <div class="fx-row d-flex align-items-center">
      <svg class="fx-tw2" width="13" height="21"><use href="#s-arrow"/></svg>
      <div class="fx-rowbox d-flex align-items-center" style="width:284px">
        <svg style="margin-left:6px" width="28" height="28" viewBox="0 0 28 28"><circle cx="14" cy="14" r="8" fill="none" stroke="#777" stroke-width="6"/><g fill="#777"><rect x="11.500" y="0" width="5" height="28"/><rect x="11.500" y="0" width="5" height="28" transform="rotate(45 14 14)"/><rect x="11.500" y="0" width="5" height="28" transform="rotate(90 14 14)"/><rect x="11.500" y="0" width="5" height="28" transform="rotate(135 14 14)"/></g><circle cx="14" cy="14" r="6" fill="#f0f0f0"/></svg>
        <span style="margin-left:25px">Document Settings</span>
      </div>
    </div>
    <div class="fx-row d-flex align-items-center">
      <svg class="fx-tw2" width="13" height="21"><use href="#s-arrow"/></svg>
      <div class="fx-rowbox d-flex align-items-center" style="width:228px">
        <svg style="margin-left:6px" width="32" height="30"><use href="#s-folder"/></svg>
        <span style="margin-left:28px">Named Views</span>
      </div>
    </div>
    <div class="fx-row d-flex align-items-center">
      <svg class="fx-tw2" width="13" height="21"><use href="#s-arrow"/></svg>
      <div class="fx-rowbox d-flex align-items-center" style="width:206px">
        <svg style="margin-left:6px" width="32" height="26" viewBox="0 0 32 26"><path d="M1 13C9 0 23 0 31 13 23 26 9 26 1 13Z" fill="none" stroke="#8f8f8f" stroke-width="2"/><circle cx="16" cy="13" r="6" fill="none" stroke="#8f8f8f" stroke-width="2"/><path d="M6 2 26 24" stroke="#8f8f8f" stroke-width="2"/></svg>
        <svg style="margin-left:18px" width="32" height="30"><use href="#s-folder"/></svg>
        <span style="margin-left:28px">Origin</span>
      </div>
    </div>
    <div class="fx-row d-flex align-items-center">
      <svg class="fx-tw2" width="13" height="21"><use href="#s-arrow"/></svg>
      <div class="fx-rowbox d-flex align-items-center" style="width:206px">
        <svg style="margin-left:6px" width="32" height="22"><use href="#s-eye"/></svg>
        <svg style="margin-left:18px" width="32" height="30"><use href="#s-folder"/></svg>
        <span style="margin-left:28px">Bodies</span>
      </div>
    </div>
  </div>

  <div class="fx-panel fx-comments position-absolute d-flex align-items-center">
    <span style="margin-left:48px">COMMENTS</span>
    <svg class="ms-auto" width="20" height="20" viewBox="0 0 20 20" style="margin-right:19px"><circle cx="10" cy="10" r="9" fill="#333"/><path d="M4 8.500H8.500V4H11.500V8.500H16V11.500H11.500V16H8.500V11.500H4Z" fill="#eee"/></svg>
  </div>

  <svg class="fx-cube position-absolute" width="220" height="200" viewBox="2660 326 220 200">
    <defs><filter id="f-sh" x="-40%" y="-40%" width="180%" height="180%"><feGaussianBlur stdDeviation="8"/></filter><filter id="f-b"><feGaussianBlur stdDeviation=".45"/></filter></defs>
    <polygon points="2720,428 2773,465 2830,425 2800,400" fill="#000" opacity=".28" filter="url(#f-sh)"/>
    <polygon points="2716,359 2773,333 2831,359 2773,390" fill="#efefef" stroke="#999" stroke-width="1"/>
    <polygon points="2716,359 2773,390 2773,460 2720,423" fill="#ececec" stroke="#999" stroke-width="1"/>
    <polygon points="2831,359 2773,390 2773,460 2827,420" fill="#e6e6e6" stroke="#999" stroke-width="1"/>
    <g filter="url(#f-b)" font-family="Liberation Sans,sans-serif" font-weight="700" fill="#9a9a9a">
      <text transform="matrix(.86 .3 -.5 .42 2762 358)" font-size="17">TOP</text>
      <text transform="matrix(.84 .5 0 1 2725 403)" font-size="14">FRONT</text>
      <text transform="matrix(.84 -.5 0 1 2786 423)" font-size="14">RIGHT</text>
    </g>
    <path d="M2712 347 2720 423" stroke="#7a7af8" stroke-width="2.500"/>
    <path d="M2720 423 2782 467" stroke="#f58a8a" stroke-width="2.500"/>
    <text x="2711" y="344" font-family="Liberation Sans,sans-serif" font-size="24" fill="#7a7af8" text-anchor="middle">Z</text>
    <text x="2793" y="485" font-family="Liberation Sans,sans-serif" font-size="24" fill="#f77" text-anchor="middle">X</text>
  </svg>

  <div class="fx-navbar position-absolute d-flex align-items-center">
    <svg width="474" height="48" viewBox="1204 1408 474 48">
      <defs><linearGradient id="g-nb" x1="0" y1="0" x2="0" y2="1"><stop offset="0" stop-color="#b7cfe9"/><stop offset="1" stop-color="#8ab0da"/></linearGradient></defs>
      <path d="M1227 1417 1235 1427H1231V1445H1223V1427H1219Z" fill="#f8f8f8" stroke="#555" stroke-width="1.200"/><ellipse cx="1227" cy="1432" rx="14" ry="6" fill="none" stroke="#444" stroke-width="1.500"/><path d="M1217 1433 1222 1429V1437Z" fill="#333"/>
      <path d="M1252 1429H1264L1258 1436Z" fill="#333"/>
      <path d="M1279 1424 1292 1419 1296 1423 1304 1420V1425Z" fill="#8f9aa8" stroke="#555"/><rect x="1279" y="1425" width="27" height="20" fill="#f4f4f4" stroke="#444" stroke-width="1.200"/><rect x="1283" y="1430" width="19" height="11" fill="#9aa5b2" stroke="#555"/>
      <path d="M1337 1446C1332 1440 1328 1437 1330 1434 1333 1433 1336 1437 1337 1438V1421C1338 1418 1340 1418 1341 1421V1432 1419C1342 1416 1345 1416 1346 1419V1432 1420C1347 1417 1350 1417 1351 1420V1433 1423C1352 1420 1355 1420 1355 1423 1356 1432 1355 1440 1351 1446Z" fill="#f6f6f6" stroke="#555" stroke-width="1.200"/>
      <circle cx="1392" cy="1428" r="10.500" fill="#d8efee" stroke="#555" stroke-width="1.300"/><path d="M1400 1436 1410 1445" stroke="#333" stroke-width="4"/><path d="M1407 1420H1412M1409.500 1417.500V1422.500M1407 1425H1412" stroke="#333" stroke-width="1"/>
      <circle cx="1443" cy="1428" r="10.500" fill="#f6f6f6" stroke="#555" stroke-width="1.300"/><rect x="1438" y="1423" width="10" height="10" fill="#dfe5ed" stroke="#555"/><path d="M1451 1436 1461 1445" stroke="#333" stroke-width="4"/>
      <path d="M1474 1429H1486L1480 1436Z" fill="#333"/>
      <rect x="1500" y="1417" width="29" height="23" fill="#f5f5f5" stroke="#444" stroke-width="1.200"/><rect x="1503" y="1420" width="23" height="16" fill="url(#g-nb)" stroke="#555"/><path d="M1511 1440H1518L1520 1444H1524V1446H1505V1444H1509Z" fill="#c8c8c8"/>
      <path d="M1534 1429H1546L1540 1436Z" fill="#333"/>
      <rect x="1561" y="1418" width="28" height="27" fill="#d9dce4" stroke="#666"/><path d="M1566 1418V1445M1571 1418V1445M1575 1418V1445M1580 1418V1445M1585 1418V1445M1561 1423H1589M1561 1428H1589M1561 1432H1589M1561 1437H1589M1561 1441H1589" stroke="#777" stroke-width="1"/><rect x="1561" y="1418" width="28" height="27" fill="none" stroke="#555"/>
      <path d="M1596 1429H1608L1602 1436Z" fill="#333"/>
      <rect x="1623.500" y="1419.500" width="28" height="25" fill="#f2f2f2" stroke="#3a5a85" stroke-width="1.500"/><rect x="1625.500" y="1421" width="11" height="10" fill="#8db4dd" stroke="#3a5a85"/><rect x="1638.500" y="1421" width="11" height="10" fill="#8db4dd" stroke="#3a5a85"/><rect x="1625.500" y="1433" width="11" height="10" fill="#8db4dd" stroke="#3a5a85"/><rect x="1638.500" y="1433" width="11" height="10" fill="#8db4dd" stroke="#3a5a85"/>
      <path d="M1658 1429H1670L1664 1436Z" fill="#333"/>
    </svg>
  </div>

  <div class="fx-mark position-absolute d-flex align-items-center justify-content-center"><svg width="24" height="16" viewBox="0 0 24 16"><path d="M2 13C7 12 10 6 15 4 18 3 22 2 23 3 20 5 20 8 16 10 12 12 7 11 5 13Z" fill="#eee"/><path d="M8 14C12 13 16 12 19 9" stroke="#111" stroke-width="1" fill="none"/></svg></div>
</div>

<div class="fx-split"></div>
<div class="fx-time d-flex position-relative">
  <svg width="2880" height="95" viewBox="0 1473 2880 95">
    <g fill="#666">
      <rect x="22" y="1510" width="4" height="24"/><path d="M44 1510V1534L27 1522Z"/>
      <path d="M89 1510V1534L70 1522Z"/><rect x="92" y="1516" width="4" height="12"/>
      <path d="M122 1506 146 1521 122 1536Z"/>
      <rect x="170" y="1516" width="4" height="12"/><path d="M177 1510 196 1522 177 1534Z"/>
      <path d="M222 1510 239 1522 222 1534Z"/><rect x="240" y="1510" width="4" height="24"/>
    </g>
    <use href="#s-mesh" x="292" y="1509" width="28" height="27"/>
    <path d="M315 1505 317 1512 322 1509 320 1514 323 1516 320 1519 322 1524 317 1521 315 1527 313 1521 308 1524 310 1519 305 1516 310 1514 308 1509 313 1512Z" fill="#f6a800" stroke="#fff"/>
    <polygon points="347,1506 365,1506 370,1512 370,1527 365,1533 347,1533 342,1527 342,1512" fill="#ea7170" stroke="#c05e5e"/><polygon points="347,1506 365,1506 365,1516 347,1516" fill="#59c27b"/><polygon points="342,1512 347,1506 347,1516" fill="#22c5dd"/><polygon points="365,1516 370,1512 370,1527 365,1533" fill="#4190c8"/><polygon points="342,1512 347,1516 347,1533 342,1527" fill="#f2a883"/><polygon points="365,1506 370,1512 365,1516" fill="#e8cf7c"/>
    <use href="#s-mesh" x="388" y="1504" width="17" height="19"/>
    <path d="M392 1527V1532H400" stroke="#222" stroke-width="1.200" fill="none"/><path d="M398 1529 402 1532 398 1534Z" fill="#222"/>
    <path d="M407 1520C407 1516 420 1516 420 1520V1532C420 1536 407 1536 407 1532Z" fill="#e2e2e2" stroke="#666" stroke-width="1.200"/>
    <path d="M309.500 1542V1555H405M356 1542V1555M405 1542V1555" stroke="#c8c8c8" stroke-width="3" fill="none"/>
    <path d="M416 1492H440V1500L430 1511H426L416 1500Z" fill="#666"/><rect x="426" y="1508" width="4" height="48" fill="#666"/>
    <g transform="translate(2836 1521)"><circle r="9" fill="none" stroke="#777" stroke-width="6"/><g fill="#777"><rect x="-2.500" y="-15" width="5" height="30"/><rect x="-2.500" y="-15" width="5" height="30" transform="rotate(45)"/><rect x="-2.500" y="-15" width="5" height="30" transform="rotate(90)"/><rect x="-2.500" y="-15" width="5" height="30" transform="rotate(135)"/></g><circle r="6" fill="#eaeaea"/></g>
  </svg>
</div>

</div>
<script src="https://cdn.jsdelivr.net/npm/bootstrap@5.3.0/dist/js/bootstrap.bundle.min.js"></script>
</body>
</html>
